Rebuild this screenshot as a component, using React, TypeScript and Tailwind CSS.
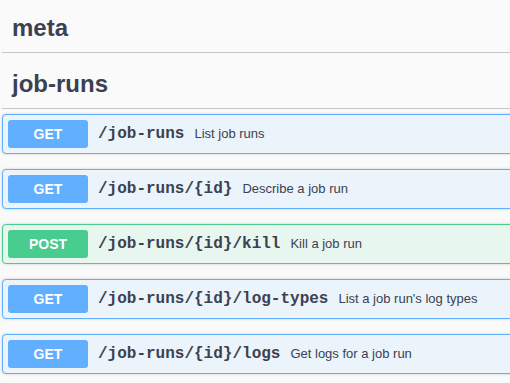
type Op = {
  method: "GET" | "POST";
  path: string;
  summary: string;
};

const ops: Op[] = [
  { method: "GET", path: "/job-runs", summary: "List job runs" },
  { method: "GET", path: "/job-runs/{id}", summary: "Describe a job run" },
  { method: "POST", path: "/job-runs/{id}/kill", summary: "Kill a job run" },
  { method: "GET", path: "/job-runs/{id}/log-types", summary: "List a job run's log types" },
  { method: "GET", path: "/job-runs/{id}/logs", summary: "Get logs for a job run" }
];

function TagHeader({ name, className }: { name: string; className?: string }) {
  return (
    <h3
      className={`border-b border-[#c4c6cb] py-[10px] pl-[10px] pr-5 text-[24px] font-bold leading-[28px] text-[#3b4151] ${className ?? ""}`}
    >
      {name}
    </h3>
  );
}

function OpBlock({ op }: { op: Op }) {
  const isPost = op.method === "POST";
  return (
    <div
      className={`mb-[15px] rounded-[4px] border shadow-[0_0_3px_rgba(0,0,0,0.19)] ${
        isPost ? "border-[#49cc90] bg-[#e8f6f0]" : "border-[#61affe] bg-[#ebf3fb]"
      }`}
    >
      <div className="flex items-center p-[5px]">
        <span
          className={`flex h-[28px] w-[80px] shrink-0 items-center justify-center rounded-[3px] text-[14px] font-bold text-white ${
            isPost ? "bg-[#49cc90]" : "bg-[#61affe]"
          }`}
        >
          {op.method}
        </span>
        <span className="pl-[10px] pr-[10px] font-['Liberation_Mono',monospace] text-[16px] font-bold text-[#3b4151]">
          {op.path}
        </span>
        <span className="text-[13px] text-[#3b4151]">{op.summary}</span>
      </div>
    </div>
  );
}

export default function App() {
  return (
    <div className="h-[383px] w-[510px] overflow-hidden bg-[#fafafa] font-['Liberation_Sans',Arial,sans-serif]">
      <div className="ml-[2px] w-[560px] pt-[4px]">
        <TagHeader name="meta" />
        <TagHeader name="job-runs" className="mt-[7px]" />
        <div className="mt-[5px]">
          {ops.map((op) => (
            <OpBlock key={op.path} op={op} />
          ))}
        </div>
      </div>
    </div>
  );
}
